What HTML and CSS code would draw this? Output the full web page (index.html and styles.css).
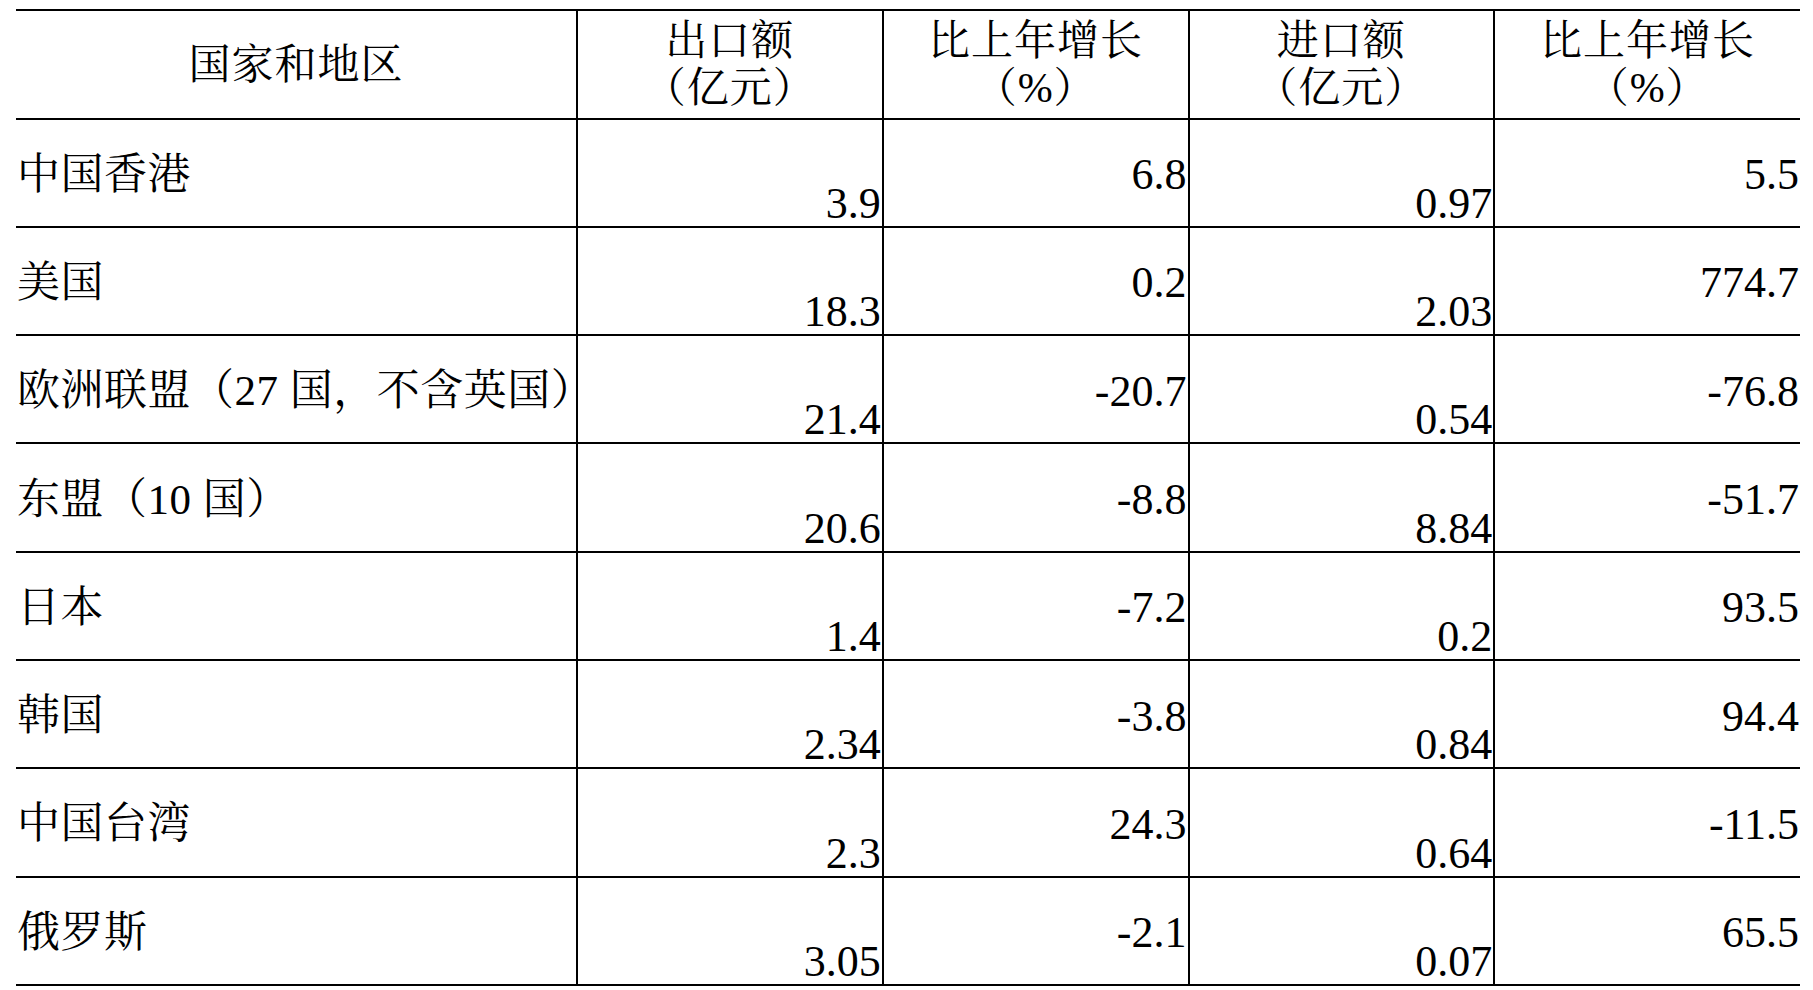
FILE: index.html
```html
<!DOCTYPE html>
<html lang="zh-CN">
<head>
<meta charset="utf-8">
<title>国家和地区进出口</title>
<link rel="stylesheet" href="styles.css">
</head>
<body>
<table class="trade">
  <colgroup>
    <col class="c-name">
    <col class="c-num">
    <col class="c-num">
    <col class="c-num">
    <col class="c-num">
  </colgroup>
  <thead>
    <tr>
      <th class="h-name">国家和地区</th>
      <th>出口额<br>（亿元）</th>
      <th>比上年增长<br>（%）</th>
      <th>进口额<br>（亿元）</th>
      <th class="last">比上年增长<br>（%）</th>
    </tr>
  </thead>
  <tbody>
    <tr><td class="name">中国香港</td><td class="low">3.9</td><td class="mid">6.8</td><td class="low">0.97</td><td class="mid last">5.5</td></tr>
    <tr><td class="name">美国</td><td class="low">18.3</td><td class="mid">0.2</td><td class="low">2.03</td><td class="mid last">774.7</td></tr>
    <tr><td class="name">欧洲联盟（27 国，不含英国）</td><td class="low">21.4</td><td class="mid">-20.7</td><td class="low">0.54</td><td class="mid last">-76.8</td></tr>
    <tr><td class="name">东盟（10 国）</td><td class="low">20.6</td><td class="mid">-8.8</td><td class="low">8.84</td><td class="mid last">-51.7</td></tr>
    <tr><td class="name">日本</td><td class="low">1.4</td><td class="mid">-7.2</td><td class="low">0.2</td><td class="mid last">93.5</td></tr>
    <tr><td class="name">韩国</td><td class="low">2.34</td><td class="mid">-3.8</td><td class="low">0.84</td><td class="mid last">94.4</td></tr>
    <tr><td class="name">中国台湾</td><td class="low">2.3</td><td class="mid">24.3</td><td class="low">0.64</td><td class="mid last">-11.5</td></tr>
    <tr><td class="name">俄罗斯</td><td class="low">3.05</td><td class="mid">-2.1</td><td class="low">0.07</td><td class="mid last">65.5</td></tr>
  </tbody>
</table>
</body>
</html>
```
FILE: styles.css
```css
html, body {
  margin: 0;
  padding: 0;
  background: #ffffff;
}

body {
  color: #000000;
  font-family: "Liberation Serif", "Noto Serif CJK SC", "Noto Sans CJK SC", serif;
}

.trade {
  margin: 9px 0 0 16px;
  width: 1784px;
  border-collapse: collapse;
  table-layout: fixed;
}

.c-name { width: 561px; }
.c-num { width: 305.75px; }

.trade thead tr {
  height: 108.5px;
}

.trade tbody tr {
  height: 108.3px;
}

.trade th,
.trade td {
  border-top: 2px solid #000;
  border-bottom: 2px solid #000;
  border-right: 2px solid #000;
  border-left: none;
  padding: 0;
}

.trade .last {
  border-right: none;
}

.trade th {
  font-weight: normal;
  font-size: 42px;
  letter-spacing: 1px;
  line-height: 47px;
  text-align: center;
  vertical-align: middle;
  padding-top: 2px;
}

.trade td.name {
  font-size: 43px;
  letter-spacing: 0.5px;
  line-height: 50px;
  text-align: left;
  vertical-align: middle;
  padding-left: 1px;
  padding-top: 4px;
  white-space: nowrap;
}

.trade td.low,
.trade td.mid {
  font-size: 44px;
  line-height: 44px;
  text-align: right;
  padding-right: 1px;
}

.trade td.low {
  vertical-align: bottom;
}

.trade td.mid {
  vertical-align: middle;
  padding-top: 5px;
}
```
